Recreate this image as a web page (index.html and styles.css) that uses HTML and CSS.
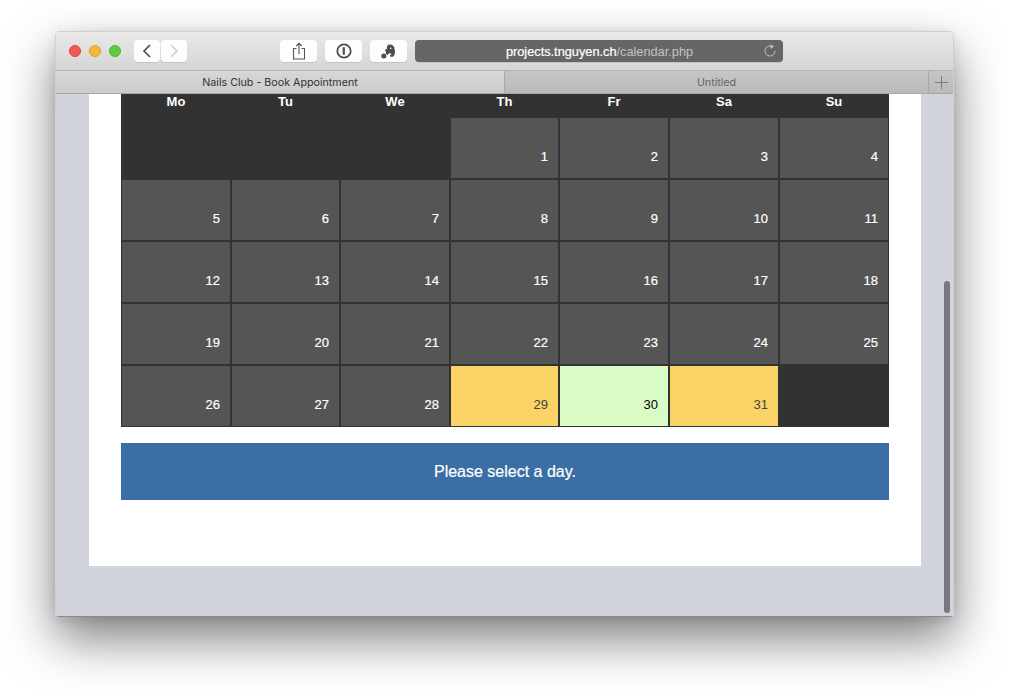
FILE: index.html
```html
<!DOCTYPE html>
<html lang="en">
<head>
<meta charset="utf-8">
<title>Nails Club - Book Appointment</title>
<link rel="stylesheet" href="styles.css">
</head>
<body>
<div class="window">
  <header class="toolbar">
    <div class="lights"><span class="light red"></span><span class="light yellow"></span><span class="light green"></span></div>
    <div class="nav">
      <button class="btn nav-btn"><svg width="10" height="16" viewBox="0 0 10 16"><path d="M8 2 2 8l6 6" fill="none" stroke="#4a4a4a" stroke-width="1.6"/></svg></button>
      <button class="btn nav-btn"><svg width="10" height="16" viewBox="0 0 10 16"><path d="M2 2l6 6-6 6" fill="none" stroke="#cfcfcf" stroke-width="1.6"/></svg></button>
    </div>
    <div class="actions">
      <button class="btn action"><svg width="14" height="18" viewBox="0 0 14 18"><path d="M4.500 6.500H1.500V17H12.500V6.500H9.500M7 12V1.500M4.300 4 7 1.300 9.700 4" fill="none" stroke="#555" stroke-width="1.100"/></svg></button>
      <button class="btn action"><svg width="16" height="16" viewBox="0 0 16 16"><circle cx="8" cy="8" r="6.700" fill="none" stroke="#4c4c4c" stroke-width="1.800"/><path d="M6.700 4.200h2.200v7.600H6.700z" fill="#4c4c4c"/></svg></button>
      <button class="btn action"><svg width="15" height="15" viewBox="0 0 15 15"><path d="M6 2.500 7.500.5l3.500.3 2.200 2.200.8 4.500-.5 3.500-2 2-2-.2-.6-1.800 1.500-.3-.4-1.200-2.200-.2-.9 1.800-2-.9-.1-2.600-.9-1.900L5.800 5z" fill="#4c4c4c"/><circle cx="2.800" cy="12" r="2.500" fill="#4c4c4c"/><circle cx="9.800" cy="4.300" r=".8" fill="#fff"/></svg></button>
    </div>
    <div class="address">
      <span class="url"><span class="host">projects.tnguyen.ch</span>/calendar.php</span>
      <svg class="reload" width="14" height="14" viewBox="0 0 14 14"><path d="M8.800 2.300A5 5 0 1 0 12 7" fill="none" stroke="#c4c4c4" stroke-width="1"/><path d="M7.500 .2 11 2.400 7.800 4.800z" fill="#c4c4c4"/></svg>
    </div>
  </header>
  <nav class="tabs">
    <div class="tab active">Nails Club - Book Appointment</div>
    <div class="tab">Untitled</div>
    <div class="new-tab"><svg width="13" height="13" viewBox="0 0 13 13"><path d="M6.500 0v13M0 6.500h13" stroke="#7b7b7b" stroke-width="1"/></svg></div>
  </nav>
  <main class="viewport">
    <section class="panel">
      <div class="calendar">
        <div class="head">Mo</div><div class="head">Tu</div><div class="head">We</div><div class="head">Th</div><div class="head">Fr</div><div class="head">Sa</div><div class="head">Su</div>
        <div class="blank"></div><div class="blank"></div><div class="blank"></div>
        <div class="day">1</div><div class="day">2</div><div class="day">3</div><div class="day">4</div>
        <div class="day">5</div><div class="day">6</div><div class="day">7</div><div class="day">8</div><div class="day">9</div><div class="day">10</div><div class="day">11</div>
        <div class="day">12</div><div class="day">13</div><div class="day">14</div><div class="day">15</div><div class="day">16</div><div class="day">17</div><div class="day">18</div>
        <div class="day">19</div><div class="day">20</div><div class="day">21</div><div class="day">22</div><div class="day">23</div><div class="day">24</div><div class="day">25</div>
        <div class="day">26</div><div class="day">27</div><div class="day">28</div><div class="day busy">29</div><div class="day free">30</div><div class="day busy">31</div><div class="blank"></div>
      </div>
      <div class="notice">Please select a day.</div>
    </section>
    <div class="scrollbar"></div>
  </main>
</div>
</body>
</html>
```
FILE: styles.css
```css
* { box-sizing: border-box; }
html, body { margin: 0; height: 100%; background: #fff; overflow: hidden; }
body { font-family: "Liberation Sans", Arial, sans-serif; }

.window {
  width: 899px;
  height: 586px;
  margin: 31px 0 0 55px;
  display: flex;
  flex-direction: column;
  border: 1px solid #d0d0d0;
  border-bottom-color: #8a8a8a;
  border-radius: 5px 5px 4px 4px;
  overflow: hidden;
  box-shadow: 0 22px 50px rgba(0,0,0,.5), 0 3px 12px rgba(0,0,0,.1);
}

.toolbar {
  height: 39px;
  flex: none;
  display: flex;
  align-items: center;
  background: linear-gradient(#e9e9e9, #d5d5d5);
  border-bottom: 1px solid #b3b3b3;
}
.lights { display: flex; gap: 8px; margin-left: 13px; }
.light { width: 12px; height: 12px; border-radius: 50%; }
.red { background: #f25a54; border: 1px solid #e0443e; }
.yellow { background: #f5b83c; border: 1px solid #dea123; }
.green { background: #5fc93f; border: 1px solid #4bb32c; }

.btn {
  height: 22px;
  padding: 0;
  border: 0;
  border-radius: 4px;
  background: #fdfdfd;
  box-shadow: 0 1px 0 #c4c4c4;
  display: flex;
  align-items: center;
  justify-content: center;
}
.nav { display: flex; gap: 1px; margin-left: 13px; }
.nav-btn { width: 26px; }
.actions { display: flex; gap: 8px; margin-left: 93px; }
.action { width: 37px; }

.address {
  width: 368px;
  height: 22px;
  margin-left: 8px;
  position: relative;
  background: #666;
  border-radius: 4px;
  box-shadow: 0 1px 0 #c4c4c4;
  display: flex;
  align-items: center;
  justify-content: center;
}
.url { font-size: 12.750px; color: #c2c2c2; padding-left: 1px; }
.host { color: #fff; -webkit-text-stroke: .2px #fff; }
.reload { position: absolute; right: 6px; top: 4px; }

.tabs {
  height: 23px;
  flex: none;
  display: flex;
  background: linear-gradient(#c6c6c6, #bababa);
  border-bottom: 1px solid #a8a8a8;
  font-family: Inter, "Liberation Sans", sans-serif;
  font-size: 10.700px;
  line-height: 23px;
  text-align: center;
}
.tab { flex: 1; color: #666; border-right: 1px solid #a8a8a8; }
.tab.active { flex: none; width: 449px; background: linear-gradient(#d7d7d7, #cbcbcb); color: #333; }
.new-tab { width: 24px; flex: none; display: flex; align-items: center; justify-content: center; }

.viewport { flex: 1; min-height: 0; background: #d1d4dd; position: relative; overflow: hidden; }
.panel {
  width: 832px;
  height: 472px;
  margin-left: 33px;
  padding: 0 32px;
  background: #fff;
}
.calendar {
  display: grid;
  grid-template-columns: 108px 107px 108px 107px 108px 108px 108px;
  grid-template-rows: 22px repeat(5, 60px);
  gap: 2px;
  width: 768px;
  padding: 0 1px 1px;
  background: #323232;
}
.head {
  color: #fff;
  font-size: 13px;
  font-weight: bold;
  line-height: 15px;
  text-align: center;
}
.blank { background: #323232; }
.day {
  display: flex;
  align-items: flex-end;
  justify-content: flex-end;
  padding: 0 10px 14px 0;
  background: #555;
  color: #fff;
  font-size: 13px;
  line-height: 15px;
  -webkit-text-stroke: .2px #fff;
}
.day.busy { background: #fad366; color: #444; -webkit-text-stroke: 0; }
.day.free { background: #d9fbc5; color: #000; -webkit-text-stroke: 0; }
.notice {
  height: 57px;
  margin-top: 16px;
  background: #3a6ea5;
  color: #fff;
  font-size: 16px;
  line-height: 57px;
  text-align: center;
  -webkit-text-stroke: .2px #fff;
}
.scrollbar {
  position: absolute;
  right: 3px;
  top: 187px;
  bottom: 3px;
  width: 6px;
  border-radius: 3px;
  background: #77787f;
}
```
